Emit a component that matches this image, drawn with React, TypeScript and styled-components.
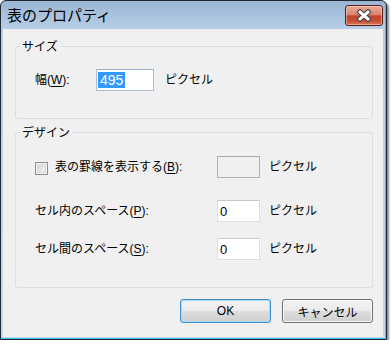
import React from 'react';
import styled, { createGlobalStyle } from 'styled-components';

const GlobalStyle = createGlobalStyle`
    html, body {
        margin: 0;
        padding: 0;
        background: #ffffff;
    }
    body {
        font-family: "Liberation Sans", "Noto Sans CJK JP", sans-serif;
        font-size: 12px;
        color: #000000;
    }
`;

const Window = styled.div`
    box-sizing: border-box;
    width: 387px;
    height: 340px;
    display: flex;
    flex-direction: column;
    border: 1px solid #1f2833;
    border-radius: 6px 6px 0 0;
    padding: 0 3px 2px 2px;
    background: linear-gradient(to bottom, #9ab6d4 0px, #b7cee7 28px, #c4d8ed 100%);
    box-shadow: inset -1px -1px 0 #3fbfee, 2px 2px 2px rgba(0, 0, 0, 0.45);
`;

const TitleBar = styled.div`
    height: 28px;
    display: flex;
    align-items: center;
    justify-content: space-between;
    padding-left: 4px;
`;

const Title = styled.div`
    font-family: "Noto Sans CJK JP", sans-serif;
    font-size: 15px;
    line-height: 18px;
    color: #000;
`;

const CloseButton = styled.div`
    box-sizing: border-box;
    align-self: flex-start;
    margin-top: 4px;
    width: 38px;
    height: 21px;
    border: 1px solid #5a1e1a;
    border-radius: 3px;
    display: flex;
    align-items: center;
    justify-content: center;
    background: linear-gradient(to bottom, #e8aa97 0%, #d98670 45%, #c2452d 52%, #c74e35 78%, #da7a5e 100%);
    box-shadow: inset 0 0 0 1px rgba(255, 230, 220, 0.45);
`;

const Client = styled.div`
    flex: 1;
    display: flex;
    flex-direction: column;
    background: #f0f0f0;
    padding: 10px 10px 0 12px;
`;

const Group = styled.fieldset<{ $gap?: number }>`
    margin: 0 0 ${p => p.$gap ?? 0}px 0;
    padding: 0;
    min-width: 0;
    border: 1px solid #d5dfe5;
    border-radius: 3px;
`;

const Legend = styled.legend`
    margin-left: 4px;
    padding: 0 3px 0 2px;
    font-family: "Noto Sans CJK JP", sans-serif;
    font-size: 12px;
    line-height: 14px;
`;

const FieldGrid = styled.div<{ $label: number; $input: number; $rows: string; $pad: string }>`
    display: grid;
    grid-template-columns: ${p => p.$label}px ${p => p.$input}px auto;
    grid-template-rows: ${p => p.$rows};
    align-items: start;
    padding: ${p => p.$pad};
`;

const Label = styled.div`
    height: 22px;
    display: flex;
    align-items: center;
    gap: 7px;
    line-height: 14px;
    white-space: nowrap;
    u {
        text-decoration: underline;
        text-underline-offset: 2px;
    }
`;

const CheckBox = styled.div`
    box-sizing: border-box;
    width: 13px;
    height: 13px;
    margin-top: 2px;
    border: 1px solid #8e8f8f;
    background: linear-gradient(135deg, #cbcfd5 0%, #e7e9ec 60%, #f6f6f6 100%);
    box-shadow: inset 0 0 0 1px #f4f4f4, inset 0 0 0 2px #d8dadd;
`;

const TextBox = styled.div<{ $disabled?: boolean; $focused?: boolean }>`
    box-sizing: border-box;
    height: 22px;
    display: flex;
    align-items: center;
    padding: 0 2px;
    border: 1px solid ${p => (p.$disabled ? '#b0b3b6' : p.$focused ? '#a9bed4' : '#dadde2')};
    border-top-color: ${p => (p.$disabled ? '#a8abae' : p.$focused ? '#98b0c9' : '#c6cad0')};
    background: ${p => (p.$disabled ? '#f0f0f0' : '#ffffff')};
    font-family: "Liberation Sans", sans-serif;
    font-size: 13px;
`;

const Selected = styled.span`
    margin-left: -1px;
    padding: 0 2px;
    line-height: 16px;
    background: #3399ff;
    color: #ffffff;
    font-size: 14px;
`;

const Unit = styled.div<{ $offset: number }>`
    height: 22px;
    display: flex;
    align-items: center;
    padding-left: ${p => p.$offset}px;
    line-height: 14px;
    white-space: nowrap;
`;

const ButtonRow = styled.div`
    display: flex;
    justify-content: flex-end;
    gap: 11px;
    margin-top: 11px;
`;

const Button = styled.button<{ $default?: boolean }>`
    box-sizing: border-box;
    width: 91px;
    height: 24px;
    padding: 0;
    border-radius: 3px;
    font-family: "Liberation Sans", "Noto Sans CJK JP", sans-serif;
    font-size: 12px;
    color: #000;
    border: 1px solid ${p => (p.$default ? '#3c8fcf' : '#707070')};
    background: linear-gradient(to bottom, #f2f2f2 0%, #ebebeb 48%, #dddddd 52%, #cfcfcf 100%);
    box-shadow: inset 0 0 0 1px ${p => (p.$default ? '#a6dcf7' : '#fbfbfb')};
`;

const CloseIcon = () => (
    <svg width="16" height="13" viewBox="0 0 16 13">
        <g strokeLinecap="square">
            <path d="M4 3 L12 10 M12 3 L4 10" stroke="#3b3b3b" strokeWidth="5" />
            <path d="M4 3 L12 10 M12 3 L4 10" stroke="#ffffff" strokeWidth="3" />
        </g>
    </svg>
);

const App = () => {
    return (
        <>
            <GlobalStyle />
            <Window>
                <TitleBar>
                    <Title>表のプロパティ</Title>
                    <CloseButton>
                        <CloseIcon />
                    </CloseButton>
                </TitleBar>
                <Client>
                    <Group $gap={6}>
                        <Legend>サイズ</Legend>
                        <FieldGrid $label={61} $input={58} $rows="22px" $pad="16px 0 27px 19px">
                            <Label>
                                <span>
                                    幅(<u>W</u>):
                                </span>
                            </Label>
                            <TextBox $focused>
                                <Selected>495</Selected>
                            </TextBox>
                            <Unit $offset={11}>ピクセル</Unit>
                        </FieldGrid>
                    </Group>
                    <Group>
                        <Legend>デザイン</Legend>
                        <FieldGrid $label={182} $input={43} $rows="44px 38px 22px" $pad="17px 0 27px 19px">
                            <Label>
                                <CheckBox />
                                <span>
                                    表の罫線を表示する(<u>B</u>):
                                </span>
                            </Label>
                            <TextBox $disabled />
                            <Unit $offset={9}>ピクセル</Unit>
                            <Label>
                                <span>
                                    セル内のスペース(<u>P</u>):
                                </span>
                            </Label>
                            <TextBox>0</TextBox>
                            <Unit $offset={9}>ピクセル</Unit>
                            <Label>
                                <span>
                                    セル間のスペース(<u>S</u>):
                                </span>
                            </Label>
                            <TextBox>0</TextBox>
                            <Unit $offset={9}>ピクセル</Unit>
                        </FieldGrid>
                    </Group>
                    <ButtonRow>
                        <Button $default>OK</Button>
                        <Button>キャンセル</Button>
                    </ButtonRow>
                </Client>
            </Window>
        </>
    );
};

export default App;
